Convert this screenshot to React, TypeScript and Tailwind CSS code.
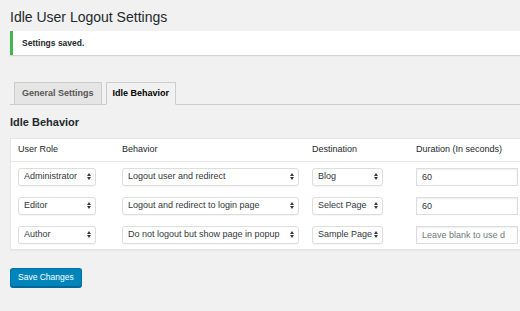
import type { ReactNode } from 'react'

type Row = {
  role: string
  behavior: string
  destination: string
  duration?: string
}

const rows: Row[] = [
  { role: 'Administrator', behavior: 'Logout user and redirect', destination: 'Blog', duration: '60' },
  { role: 'Editor', behavior: 'Logout and redirect to login page', destination: 'Select Page', duration: '60' },
  { role: 'Author', behavior: 'Do not logout but show page in popup', destination: 'Sample Page' },
]

function Arrows() {
  return (
    <svg width="4" height="7" viewBox="0 0 4 7" className="shrink-0">
      <path d="M0 3 L2 0 L4 3 Z" fill="#32373c" />
      <path d="M0 4 L4 4 L2 7 Z" fill="#32373c" />
    </svg>
  )
}

function Select({ value, width }: { value: string; width: string }) {
  return (
    <div
      className={`flex h-[18px] items-center justify-between rounded-[3px] border border-[#ddd] bg-white pl-[5px] pr-[4px] text-[9px] text-[#32373c] shadow-[0_1px_1px_rgba(0,0,0,0.04)] ${width}`}
    >
      <span className="overflow-hidden whitespace-nowrap">{value}</span>
      <Arrows />
    </div>
  )
}

function Cell({ children }: { children: ReactNode }) {
  return <div className="flex items-center">{children}</div>
}

export default function App() {
  return (
    <div
      className="h-[311px] w-[520px] overflow-hidden bg-[#f1f1f1] pl-[10px] pt-[8px] text-[#23282d]"
      style={{ fontFamily: '"Liberation Sans", Arial, sans-serif' }}
    >
      <h1 className="text-[14px] leading-[18px]">Idle User Logout Settings</h1>

      <div className="mt-[5px] flex h-[24px] w-[520px] items-center border-l-[3px] border-[#46b450] bg-white pl-[9px] shadow-[0_1px_1px_rgba(0,0,0,0.12)]">
        <p className="text-[8.5px] font-bold">Settings saved.</p>
      </div>

      <nav className="mt-[27px] flex w-[520px] gap-[4px] border-b border-[#ccc] pl-[4px]">
        <div className="-mb-px flex h-[23px] items-center border border-[#ccc] bg-[#e5e5e5] px-[7px] text-[9px] font-bold text-[#555]">
          General Settings
        </div>
        <div className="-mb-px flex h-[23px] items-center border border-[#ccc] border-b-[#f1f1f1] bg-[#f1f1f1] px-[6px] text-[9px] font-bold text-[#000]">
          Idle Behavior
        </div>
      </nav>

      <h2 className="mt-[10px] text-[11px] font-bold leading-[14px]">Idle Behavior</h2>

      <div className="mt-[9px] w-[520px] border border-[#e5e5e5] bg-white shadow-[0_1px_1px_rgba(0,0,0,0.04)]">
        <div className="grid h-[23px] grid-cols-[104px_190px_104px_1fr] items-center border-b border-[#e9e9e9] pl-[7px] text-[9px]">
          <span>User Role</span>
          <span>Behavior</span>
          <span>Destination</span>
          <span>Duration (In seconds)</span>
        </div>
        {rows.map((r) => (
          <div key={r.role} className="grid h-[29px] grid-cols-[104px_190px_104px_1fr] items-center pl-[7px]">
            <Cell>
              <Select value={r.role} width="w-[78px]" />
            </Cell>
            <Cell>
              <Select value={r.behavior} width="w-[177px]" />
            </Cell>
            <Cell>
              <Select value={r.destination} width="w-[71px]" />
            </Cell>
            <Cell>
              <input
                readOnly
                defaultValue={r.duration}
                placeholder="Leave blank to use default"
                className="h-[18px] w-[102px] border border-[#ddd] bg-white pl-[5px] pr-[12px] text-[9px] text-[#32373c] shadow-[inset_0_1px_2px_rgba(0,0,0,0.07)] outline-none placeholder:text-[#72777c]"
              />
            </Cell>
          </div>
        ))}
      </div>

      <button className="mt-[18px] block h-[19px] rounded-[3px] border border-[#0073aa] border-b-[#006799] bg-[#0085ba] px-[7px] text-[8.5px] text-white shadow-[0_1px_0_#006799]">
        Save Changes
      </button>
    </div>
  )
}
